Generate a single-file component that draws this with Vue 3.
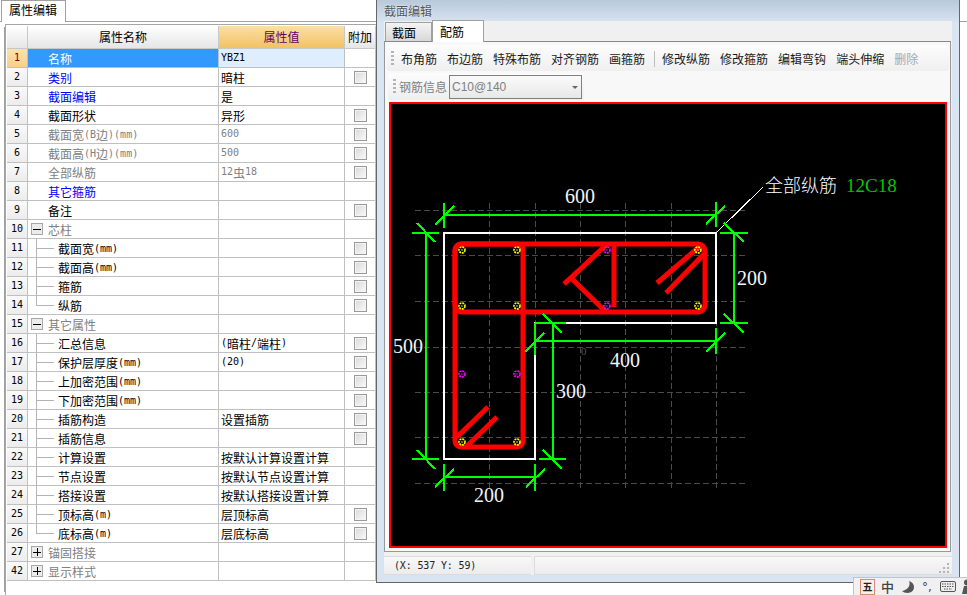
<script setup>
const S = (no, name, value = '', check = true, kind = 'plain', tree = '') => ({ no, name, value, check, kind, tree })
const rows = [
  S(1, '名称', 'YBZ1', false, 'link'),
  S(2, '类别', '暗柱', true, 'link'),
  S(3, '截面编辑', '是', false, 'link'),
  S(4, '截面形状', '异形'),
  S(5, '截面宽(B边)(mm)', '600', true, 'muted'),
  S(6, '截面高(H边)(mm)', '500', true, 'muted'),
  S(7, '全部纵筋', '12虫18', true, 'muted'),
  S(8, '其它箍筋', '', false, 'link'),
  S(9, '备注'),
  S(10, '芯柱', '', false, 'group', 'minus'),
  S(11, '截面宽(mm)', '', true, 'plain', 'mid'),
  S(12, '截面高(mm)', '', true, 'plain', 'mid'),
  S(13, '箍筋', '', true, 'plain', 'mid'),
  S(14, '纵筋', '', true, 'plain', 'end'),
  S(15, '其它属性', '', false, 'group', 'minus'),
  S(16, '汇总信息', '(暗柱/端柱)', true, 'plain', 'mid'),
  S(17, '保护层厚度(mm)', '(20)', true, 'plain', 'mid'),
  S(18, '上加密范围(mm)', '', true, 'plain', 'mid'),
  S(19, '下加密范围(mm)', '', true, 'plain', 'mid'),
  S(20, '插筋构造', '设置插筋', true, 'plain', 'mid'),
  S(21, '插筋信息', '', true, 'plain', 'mid'),
  S(22, '计算设置', '按默认计算设置计算', false, 'plain', 'mid'),
  S(23, '节点设置', '按默认节点设置计算', false, 'plain', 'mid'),
  S(24, '搭接设置', '按默认搭接设置计算', false, 'plain', 'mid'),
  S(25, '顶标高(m)', '层顶标高', true, 'plain', 'mid'),
  S(26, '底标高(m)', '层底标高', true, 'plain', 'end'),
  S(27, '锚固搭接', '', false, 'group', 'plus'),
  S(42, '显示样式', '', false, 'group', 'plus'),
]
const segs = (t) => (t.match(/[\x00-\x7f]+|[^\x00-\x7f]+/g) || []).map((text) => ({ text, lat: /^[\x00-\x7f]/.test(text) }))

const tools = ['布角筋', '布边筋', '特殊布筋', '对齐钢筋', '画箍筋']
const tools2 = ['修改纵筋', '修改箍筋', '编辑弯钩', '端头伸缩']

const gridX = [489, 535, 580, 625, 671, 716]
const gridY = [210, 255, 301, 347, 392, 437, 483]
const yellow = [[462, 250], [517, 250], [462, 306], [517, 306], [698, 250], [698, 306], [462, 442], [517, 442]]
const magenta = [[607, 250], [607, 306], [462, 374], [517, 374]]
const green = [
  [444, 215, 716, 215], [444, 203, 444, 228], [435, 225, 454, 206], [716, 202, 716, 227], [706, 224, 725, 206],
  [426, 233, 426, 459], [412, 233, 439, 233], [417, 223, 435, 242], [412, 459, 439, 459], [417, 450, 435, 469],
  [734, 233, 734, 323], [720, 233, 748, 233], [724, 223, 744, 242], [720, 323, 748, 323], [724, 314, 744, 333],
  [535, 341, 716, 341], [535, 323, 535, 355], [525, 352, 544, 333], [716, 328, 716, 354], [706, 352, 725, 333],
  [553, 323, 553, 459], [535, 323, 566, 323], [543, 314, 562, 333], [539, 459, 566, 459], [543, 450, 562, 469],
  [444, 477, 535, 477], [444, 464, 444, 491], [435, 487, 454, 469], [535, 464, 535, 491], [526, 487, 545, 469],
]
const dims = [
  { t: '600', x: 565, y: 203 }, { t: '200', x: 737, y: 285 }, { t: '500', x: 393, y: 353 },
  { t: '400', x: 610, y: 367 }, { t: '300', x: 556, y: 398 }, { t: '200', x: 474, y: 502 },
]
const gripDots = [[10, 2], [6, 6], [10, 6], [2, 10], [6, 10], [10, 10]]
</script>

<template>
  <div class="page">
    <section class="panel">
      <div class="panel-tabs"><div class="panel-tab">属性编辑</div></div>
      <div class="sheet">
        <div class="row head">
          <div class="cell idx"></div>
          <div class="cell hname">属性名称</div>
          <div class="cell hvalue">属性值</div>
          <div class="cell hextra">附加</div>
        </div>
        <div v-for="r in rows" :key="r.no" class="row" :class="{ active: r.no === 1 }">
          <div class="cell idx"><span class="lat">{{ r.no }}</span></div>
          <div class="cell name" :class="[r.kind, r.tree && r.kind !== 'group' ? 'child' : '']">
            <span v-if="r.tree === 'mid' || r.tree === 'end'" class="branch" :class="r.tree"></span>
            <span v-if="r.kind === 'group'" class="toggle" :class="r.tree"></span>
            <span v-for="(s, i) in segs(r.name)" :key="i" :class="{ lat: s.lat }">{{ s.text }}</span>
          </div>
          <div class="cell value" :class="{ gray: r.kind === 'muted' }">
            <span v-for="(s, i) in segs(r.value)" :key="i" :class="{ lat: s.lat }">{{ s.text }}</span>
          </div>
          <div class="cell extra"><span v-if="r.check" class="check"></span></div>
        </div>
      </div>
    </section>

    <section class="win">
      <div class="win-title">截面编辑</div>
      <div class="client">
        <div class="tabs">
          <div class="tab">截面</div>
          <div class="tab on">配筋</div>
        </div>
        <div class="frame">
          <div class="bar bar1">
            <span class="grip"></span>
            <span v-for="t in tools" :key="t">{{ t }}</span>
            <span class="sep"></span>
            <span v-for="t in tools2" :key="t">{{ t }}</span>
            <span class="dis">删除</span>
          </div>
          <div class="bar bar2">
            <span class="grip"></span>
            <span class="lbl">钢筋信息</span>
            <div class="combo"><span>C10@140</span><i class="caret"></i></div>
          </div>
          <div class="canvas">
            <svg class="draw" width="554" height="442" viewBox="391 104 554 442">
              <g class="grid">
                <line v-for="x in gridX" :key="'x' + x" :x1="x" y1="203" :x2="x" y2="488" />
                <line v-for="y in gridY" :key="'y' + y" x1="415" :y1="y" x2="745" :y2="y" />
              </g>
              <path class="outline" d="M444 233H716V323H535V459H444Z" />
              <line class="leader" x1="717" y1="232" x2="763" y2="187" />
              <g class="rebar">
                <rect x="455" y="244" width="250" height="68" rx="7" />
                <rect x="455" y="244" width="68" height="203" rx="6" />
                <path d="M614 244V307" />
                <path d="M607 244L571 278L606 312M564 284L578 271" />
                <path d="M699 247L657 283M705 253L666 293M488 407L457 437M497 417L467 446" />
              </g>
              <g class="dims">
                <line v-for="(l, i) in green" :key="i" :x1="l[0]" :y1="l[1]" :x2="l[2]" :y2="l[3]" />
              </g>
              <g v-for="(p, i) in yellow" :key="'a' + i">
                <circle class="bar-dot yellow" :cx="p[0]" :cy="p[1]" r="3" />
                <circle class="dot-core yellow" :cx="p[0]" :cy="p[1]" r="0.8" />
              </g>
              <g v-for="(p, i) in magenta" :key="'b' + i">
                <circle class="bar-dot magenta" :cx="p[0]" :cy="p[1]" r="3" />
                <circle class="dot-core magenta" :cx="p[0]" :cy="p[1]" r="0.8" />
              </g>
              <text v-for="(d, i) in dims" :key="'d' + i" class="dim" :x="d.x" :y="d.y">{{ d.t }}</text>
              <text class="zero" x="581" y="355">0</text>
              <text class="note" x="765" y="192">全部纵筋</text>
              <text class="note-g" x="846" y="192">12C18</text>
            </svg>
          </div>
        </div>
        <div class="status">
          <div class="st st1">(X: 537 Y: 59)</div>
          <div class="st st2">
            <svg class="size-grip" width="13" height="13" viewBox="0 0 13 13">
              <rect v-for="(g, i) in gripDots" :key="i" :x="g[0]" :y="g[1]" width="2" height="2" fill="#b4b4b4" />
            </svg>
          </div>
        </div>
      </div>
    </section>

    <div class="ime">
      <span class="ime-five"><b>五</b></span>
      <span class="ime-zh">中</span>
      <svg width="14" height="14" viewBox="0 0 14 14"><path d="M8 1C10 5 7 10 1 11C4 14 13 14 13 7C13 4 11 2 8 1Z" fill="#555" /></svg>
      <span class="ime-punc">°,</span>
      <svg width="16" height="11" viewBox="0 0 16 11"><rect x="0.5" y="0.5" width="15" height="10" rx="1.5" fill="#eee" stroke="#555" /><path d="M2 3H14M2 5.5H14M4 8H12" stroke="#555" stroke-dasharray="1.5 1" /></svg>
      <svg width="10" height="15" viewBox="0 0 10 15"><circle cx="5" cy="3.5" r="3" fill="#555" /><path d="M0 15L2 7H8L10 15Z" fill="#555" /></svg>
    </div>
  </div>
</template>

<style>
html, body { margin: 0; background: #fff; }
</style>

<style scoped>
.page {
  position: relative;
  width: 967px;
  height: 595px;
  overflow: hidden;
  background: #fff;
  color: #000;
  font: 12px/1 "Noto Sans CJK SC", "Liberation Sans", sans-serif;
}
.lat { font-family: "DejaVu Sans Mono", "Liberation Mono", monospace; font-size: 10px; }

/* left property panel */
.panel { height: 595px; display: flex; flex-direction: column; }
.panel-tabs { height: 22px; box-sizing: border-box; border-bottom: 1px solid #a0a0a0; }
.panel-tab {
  box-sizing: border-box;
  width: 65px;
  height: 22px;
  margin-left: 1px;
  padding: 3px 0 0 7px;
  border: 1px solid #a0a0a0;
  border-bottom: 0;
  background: #fff;
  font-size: 12px;
}
.sheet {
  box-sizing: border-box;
  flex: 1;
  width: 371px;
  margin: 2px 0 0 5px;
  padding: 1px 0 1px 1px;
  border-left: 1px solid #a6a6a6;
  border-top: 1px solid #a6a6a6;
  box-shadow: -4px 0 0 -3px #a0a0a0;
}
.row { display: grid; grid-template-columns: 21px 191px 126px 31px; height: 19px; }
.row.head { height: 23px; }
.cell {
  box-sizing: border-box;
  position: relative;
  display: flex;
  align-items: center;
  border-right: 1px solid #c0c0c0;
  border-bottom: 1px solid #c0c0c0;
  white-space: nowrap;
}
.idx { justify-content: center; background: linear-gradient(#fafafa, #ececec); }
.head .cell { justify-content: center; border-color: #c8c8c8; background: linear-gradient(#fff, #e6e6e6); }
.head .hvalue { background: linear-gradient(#fbdfa4, #f2c264); color: #660066; }
.active .idx { background: linear-gradient(#fde2ad, #f9cf88); color: #800000; }
.active .name { background: #3399ff; color: #fff; }
.active .value { background: #deeeff; }
.name { padding: 2px 0 0 20px; }
.name.child { padding-left: 30px; }
.name.group { padding-left: 20px; color: #808080; }
.name.link { color: #0000ff; }
.name.muted, .gray { color: #808080; }
.active .name.link { color: #fff; }
.value { padding: 2px 0 0 2px; }
.value .lat { margin-top: -2px; }
.extra { justify-content: center; }
.check {
  box-sizing: border-box;
  width: 13px;
  height: 13px;
  border: 1px solid #9a9a9a;
  background: linear-gradient(135deg, #d8d8d8, #fafafa);
  box-shadow: inset 0 0 0 1px #f4f4f4;
}
.branch { position: absolute; left: 8px; top: 0; width: 17px; height: 9px; border-left: 1px solid #b4b4b4; border-bottom: 1px solid #b4b4b4; }
.branch.mid::after { content: ""; position: absolute; left: -1px; top: 9px; height: 10px; border-left: 1px solid #b4b4b4; }
.toggle {
  position: absolute;
  left: 3px;
  top: 3px;
  box-sizing: border-box;
  width: 12px;
  height: 12px;
  border: 1px solid #a8a8a8;
  background:
    linear-gradient(#000, #000) center / 8px 1px no-repeat,
    #ececec;
}
.toggle.plus {
  background:
    linear-gradient(#000, #000) center / 8px 1px no-repeat,
    linear-gradient(#000, #000) center / 1px 8px no-repeat,
    #ececec;
}

/* floating window */
.win {
  position: absolute;
  left: 376px;
  top: 0;
  box-sizing: border-box;
  width: 584px;
  height: 583px;
  border: 1px solid #666;
  border-top: 0;
  background: linear-gradient(#b8c9db 0, #d9e5f2 24px, #d8e4f2 100%);
}
.win-title { height: 21px; padding: 5px 0 0 7px; box-sizing: border-box; color: #555; text-shadow: 0 0 2px #fff; }
.client { box-sizing: border-box; width: 568px; height: 554px; margin-left: 7px; background: #f0f0f0; }
.tabs { display: flex; align-items: flex-end; height: 20px; padding-left: 1px; }
.tab {
  position: relative;
  box-sizing: border-box;
  width: 47px;
  height: 19px;
  padding: 4px 0 0 6px;
  border: 1px solid #a0a0a0;
  border-bottom: 0;
  background: linear-gradient(#f4f4f4, #d8d8d8);
}
.tab.on { width: 52px; height: 22px; margin-bottom: -1px; padding: 5px 0 0 7px; background: #fff; z-index: 1; }
.frame { box-sizing: border-box; width: 567px; height: 511px; border: 1px solid #999; border-top-color: #888; padding: 3px 0 0 4px; background: #f8f8f8; }
.bar { display: flex; align-items: center; background: linear-gradient(#fcfcfc, #efefef); border-radius: 3px; color: #1a1a1a; }
.bar1 { box-sizing: border-box; width: 562px; height: 26px; gap: 10px; margin-left: -2px; padding: 2px 0 0 4px; }
.bar2 { box-sizing: border-box; width: 196px; height: 27px; margin: 2px 0 2px -1px; padding-left: 5px; color: #808080; }
.grip {
  width: 3px;
  height: 16px;
  margin-right: -3px;
  background: repeating-linear-gradient(#b4b4b4 0 2px, transparent 2px 4px);
}
.bar2 .grip { margin-right: 3px; }
.sep { width: 1px; height: 16px; margin: 0 -3px 0 -1px; background: #bdbdbd; }
.dis { color: #a0a8b8; }
.lbl { margin-right: 2px; }
.combo {
  box-sizing: border-box;
  position: relative;
  display: flex;
  align-items: center;
  width: 133px;
  height: 24px;
  padding-left: 2px;
  border: 1px solid #808080;
  background: linear-gradient(#fafafa, #e8e8e8);
  font-family: "Liberation Sans", sans-serif;
  font-size: 12px;
}
.caret {
  position: absolute;
  right: 3px;
  top: 10px;
  border: 3px solid transparent;
  border-top: 3px solid #666;
}
.canvas { box-sizing: border-box; width: 558px; height: 446px; border: 2px solid #ff0000; background: #000; }
.draw { display: block; }
.grid line { stroke: #4a4a4a; stroke-width: 1; stroke-dasharray: 6 3; shape-rendering: crispEdges; }
.outline { fill: none; stroke: #fff; stroke-width: 2; shape-rendering: crispEdges; }
.leader { stroke: #fff; stroke-width: 1; shape-rendering: crispEdges; }
.rebar rect, .rebar path { fill: none; stroke: #ff0000; stroke-width: 5; }
.dims line { stroke: #00ff00; stroke-width: 2; shape-rendering: crispEdges; }
.bar-dot { fill: none; stroke-width: 1.6; stroke-dasharray: 2 0.8; }
.bar-dot.yellow { stroke: #ffff00; }
.bar-dot.magenta { stroke: #ff00ff; }
.dot-core.yellow { fill: #ffff00; }
.dot-core.magenta { fill: #ff00ff; }
.dim { fill: #f2f6fa; font: 20px "Liberation Serif", serif; }
.zero { fill: #555; font: 11px "Liberation Serif", serif; }
.note { fill: #fff; font: 18px "Noto Sans CJK SC", serif; font-weight: 300; }
.note-g { fill: #00c800; font: 19px "Liberation Serif", serif; }
.status { display: flex; gap: 3px; margin-top: 4px; }
.st { box-sizing: border-box; height: 19px; background: linear-gradient(#f8f8f8, #ececec); border-top: 1px solid #dcdcdc; border-bottom: 1px solid #dcdcdc; }
.st1 { width: 147px; padding: 3px 0 0 10px; font: 10px "DejaVu Sans Mono", monospace; letter-spacing: -0.15px; color: #222; }
.st2 { position: relative; flex: 1; border-left: 1px solid #dcdcdc; }
.size-grip { position: absolute; right: 2px; bottom: 0; }

/* input method strip */
.ime {
  position: absolute;
  left: 853px;
  top: 577px;
  box-sizing: border-box;
  display: flex;
  align-items: center;
  gap: 6px;
  width: 120px;
  height: 18px;
  padding-left: 6px;
  border: 1px solid #c4c4c4;
  border-width: 1px 0 0 1px;
  background: #f0f0f0;
  color: #444;
}
.ime-five { box-sizing: border-box; display: flex; justify-content: center; width: 15px; height: 16px; border: 1px solid #d98a70; background: #f8efe8; font-size: 10px; line-height: 14px; color: #222; }
.ime-zh { font-size: 13px; margin-right: 1px; font-weight: 500; }
.ime-punc { width: 12px; font: 12px "DejaVu Sans", sans-serif; margin-left: 1px; }
</style>
